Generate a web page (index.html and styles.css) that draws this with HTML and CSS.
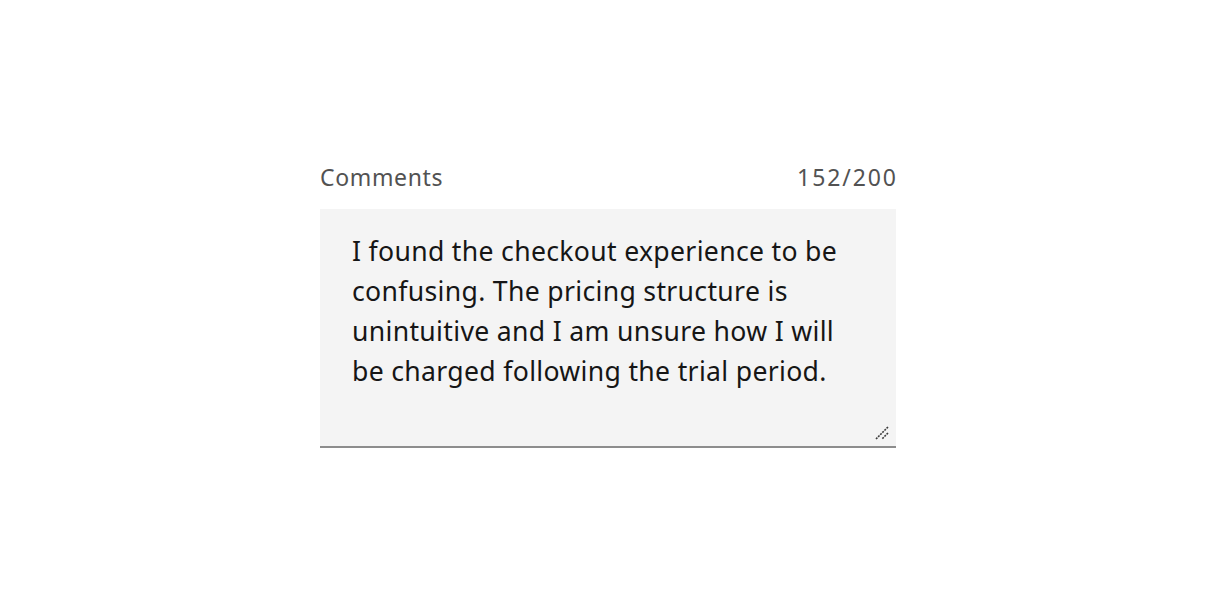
FILE: index.html
```html
<!DOCTYPE html>
<html lang="en">
<head>
<meta charset="utf-8">
<title>Comments</title>
<link rel="stylesheet" href="styles.css">
</head>
<body>
<div class="field">
  <div class="field-header">
    <label class="field-label" for="comments">Comments</label>
    <span class="field-counter">152/200</span>
  </div>
  <div class="field-wrapper">
    <textarea id="comments" class="field-textarea" rows="4">I found the checkout experience to be
confusing. The pricing structure is
unintuitive and I am unsure how I will
be charged following the trial period.</textarea>
    <svg class="field-grip" width="16" height="16" viewBox="0 0 16 16" aria-hidden="true">
      <line x1="14" y1="2" x2="2" y2="14" stroke="#3d3d3d" stroke-width="1.6" stroke-dasharray="2 1"/>
      <line x1="14" y1="8" x2="8" y2="14" stroke="#3d3d3d" stroke-width="1.6" stroke-dasharray="2 1"/>
    </svg>
  </div>
</div>
</body>
</html>
```

FILE: styles.css
```css
html, body {
  margin: 0;
  padding: 0;
  background: #ffffff;
}

body {
  min-height: 100vh;
  display: flex;
  align-items: center;
  justify-content: center;
  font-family: "Noto Sans", "Liberation Sans", sans-serif;
}

.field {
  width: 576px;
  display: flex;
  flex-direction: column;
}

.field-header {
  display: flex;
  justify-content: space-between;
  align-items: baseline;
  margin-bottom: 16px;
}

.field-label,
.field-counter {
  font-size: 23px;
  line-height: 32px;
  letter-spacing: 0.64px;
  color: #525252;
}

.field-counter {
  letter-spacing: 1.9px;
  margin-right: -1.9px;
}

.field-wrapper {
  position: relative;
  background: #f4f4f4;
  border-bottom: 2px solid #8d8d8d;
}

.field-textarea {
  display: block;
  box-sizing: border-box;
  width: 576px;
  height: 237px;
  margin: 0;
  padding: 22px 32px;
  border: 0;
  border-radius: 0;
  background: transparent;
  color: #161616;
  font-family: "Noto Sans", "Liberation Sans", sans-serif;
  font-size: 26.6px;
  line-height: 40px;
  letter-spacing: 0.32px;
  resize: none;
  outline: none;
  white-space: pre;
  overflow: hidden;
}

.field-grip {
  position: absolute;
  right: 6px;
  bottom: 5px;
  pointer-events: none;
}
```
